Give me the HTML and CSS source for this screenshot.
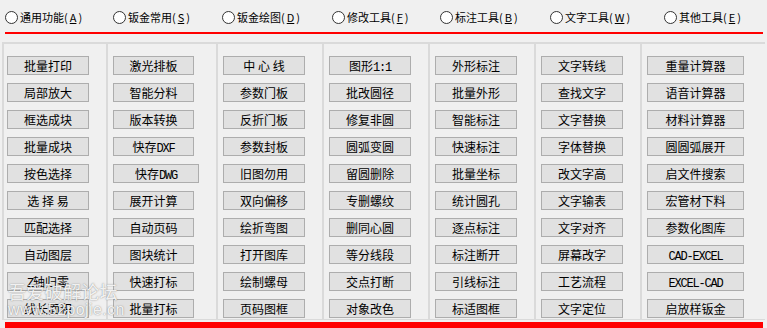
FILE: index.html
```html
<!DOCTYPE html>
<html lang="zh-CN">
<head>
  <meta charset="UTF-8" />
  <title>工具面板</title>
  <link rel="stylesheet" href="styles.css">
</head>
<body>

  <!-- tab radios -->
  <div class="tabs">
    <label class="tab"><span class="radio"></span>通用功能(<u>A</u>)</label>
    <label class="tab"><span class="radio"></span>钣金常用(<u>S</u>)</label>
    <label class="tab"><span class="radio"></span>钣金绘图(<u>D</u>)</label>
    <label class="tab"><span class="radio"></span>修改工具(<u>F</u>)</label>
    <label class="tab"><span class="radio"></span>标注工具(<u>B</u>)</label>
    <label class="tab"><span class="radio"></span>文字工具(<u>W</u>)</label>
    <label class="tab"><span class="radio"></span>其他工具(<u>E</u>)</label>
  </div>
  <div class="rule"></div>

  <div class="panel">
    <div class="col first">
      <button class="btn">批量打印</button>
      <button class="btn">局部放大</button>
      <button class="btn">框选成块</button>
      <button class="btn">批量成块</button>
      <button class="btn">按色选择</button>
      <button class="btn">选&nbsp;择&nbsp;易</button>
      <button class="btn">匹配选择</button>
      <button class="btn">自动图层</button>
      <button class="btn"><span class="en">Z</span>轴归零</button>
      <button class="btn">线长面积</button>
    </div>
    <div class="col second">
      <button class="btn">激光排板</button>
      <button class="btn">智能分料</button>
      <button class="btn">版本转换</button>
      <button class="btn">快存<span class="en">DXF</span></button>
      <button class="btn wide">快存<span class="en">DWG</span></button>
      <button class="btn">展开计算</button>
      <button class="btn">自动页码</button>
      <button class="btn">图块统计</button>
      <button class="btn">快速打标</button>
      <button class="btn">批量打标</button>
    </div>
    <div class="col">
      <button class="btn">中&nbsp;心&nbsp;线</button>
      <button class="btn">参数门板</button>
      <button class="btn">反折门板</button>
      <button class="btn">参数封板</button>
      <button class="btn">旧图勿用</button>
      <button class="btn">双向偏移</button>
      <button class="btn">绘折弯图</button>
      <button class="btn">打开图库</button>
      <button class="btn">绘制螺母</button>
      <button class="btn">页码图框</button>
    </div>
    <div class="col">
      <button class="btn">图形<span class="en">1:1</span></button>
      <button class="btn">批改圆径</button>
      <button class="btn">修复非圆</button>
      <button class="btn">圆弧变圆</button>
      <button class="btn">留圆删除</button>
      <button class="btn">专删螺纹</button>
      <button class="btn">删同心圆</button>
      <button class="btn">等分线段</button>
      <button class="btn">交点打断</button>
      <button class="btn">对象改色</button>
    </div>
    <div class="col">
      <button class="btn">外形标注</button>
      <button class="btn">批量外形</button>
      <button class="btn">智能标注</button>
      <button class="btn">快速标注</button>
      <button class="btn">批量坐标</button>
      <button class="btn">统计圆孔</button>
      <button class="btn">逐点标注</button>
      <button class="btn">标注断开</button>
      <button class="btn">引线标注</button>
      <button class="btn">标适图框</button>
    </div>
    <div class="col">
      <button class="btn">文字转线</button>
      <button class="btn">查找文字</button>
      <button class="btn">文字替换</button>
      <button class="btn">字体替换</button>
      <button class="btn">改文字高</button>
      <button class="btn">文字输表</button>
      <button class="btn">文字对齐</button>
      <button class="btn">屏幕改字</button>
      <button class="btn">工艺流程</button>
      <button class="btn">文字定位</button>
    </div>
    <div class="col last">
      <button class="btn">重量计算器</button>
      <button class="btn">语音计算器</button>
      <button class="btn">材料计算器</button>
      <button class="btn">圆圆弧展开</button>
      <button class="btn">启文件搜索</button>
      <button class="btn">宏管材下料</button>
      <button class="btn">参数化图库</button>
      <button class="btn"><span class="en">CAD-EXCEL</span></button>
      <button class="btn"><span class="en">EXCEL-CAD</span></button>
      <button class="btn">启放样钣金</button>
    </div>
  </div>
  <div class="rule thick"></div>

  <div class="watermark">
    <div class="wm-cn">吾爱破解论坛</div>
    <div class="wm-en">www.52pojie.cn</div>
  </div>

</body>
</html>
```

FILE: styles.css
```css
:root {
  --bg: #f0f0f0;
  --line: #dadada;
  --red: #ff0000;
  --btn: #e1e1e1;
  --btn-border: #adadad;
}

body {
  margin: 0;
  background-color: var(--bg);
  font-family: "Noto Sans CJK SC", "Liberation Sans", sans-serif;
  color: #000;
  height: 328px;
  overflow: hidden;
  position: relative;
}

/* radio tabs */
.tabs {
  display: grid;
  grid-template-columns: 108px 109px 110px 108px 110px 114px 1fr;
  align-items: center;
  height: 26px;
  padding: 4px 0 2px 5px;
  font-size: 11px;
}

.tab {
  display: flex;
  align-items: center;
  gap: 2px;
  white-space: nowrap;
}

.radio {
  width: 13px;
  height: 13px;
  box-sizing: border-box;
  border: 1px solid #333;
  border-radius: 50%;
  background: #fff;
}

.tab u {
  text-underline-offset: 1px;
}

.rule {
  height: 2px;
  margin: 0 4px 0 5px;
  background-color: var(--red);
}

.rule.thick {
  height: 6px;
  margin-top: 2px;
}

/* button panel */
.panel {
  display: grid;
  grid-template-columns: 104px 110px 106px 106px 106px 106px 1fr;
  margin: 8px 2px 0 2px;
  border-top: 2px solid var(--line);
  border-left: 2px solid var(--line);
  border-bottom: 1px solid var(--line);
}

.col {
  display: flex;
  flex-direction: column;
  gap: 8px;
  padding: 12px 0 1px 5px;
  border-right: 2px solid var(--line);
}

.col.first {
  padding-left: 3px;
}

.col.last {
  border-right: none;
}

.btn {
  width: 82px;
  height: 19px;
  box-sizing: border-box;
  padding: 0;
  margin: 0;
  background-color: var(--btn);
  border: 1px solid var(--btn-border);
  border-radius: 0;
  font-family: "Noto Sans CJK SC", "Liberation Sans", sans-serif;
  font-size: 12px;
  line-height: 17px;
  color: #000;
  text-align: center;
  white-space: nowrap;
}

.second .btn {
  width: 81px;
}

.second .btn.wide {
  width: 86px;
}

.last .btn {
  width: 97px;
}

.en {
  font-family: "Liberation Mono", monospace;
  font-size: 12px;
  letter-spacing: -1.2px;
}

/* watermark overlay */
.watermark {
  position: absolute;
  left: 8px;
  top: 280px;
  color: rgba(255, 255, 255, 0.9);
  text-shadow: 0 0 1px rgba(90, 90, 90, 0.6), 0 0 2px rgba(120, 120, 120, 0.35);
  pointer-events: none;
}

.wm-cn {
  font-size: 18px;
  line-height: 22px;
  letter-spacing: 0.3px;
}

.wm-en {
  font-family: "Liberation Sans", sans-serif;
  font-size: 16px;
  line-height: 16px;
  letter-spacing: 0.4px;
}
```
